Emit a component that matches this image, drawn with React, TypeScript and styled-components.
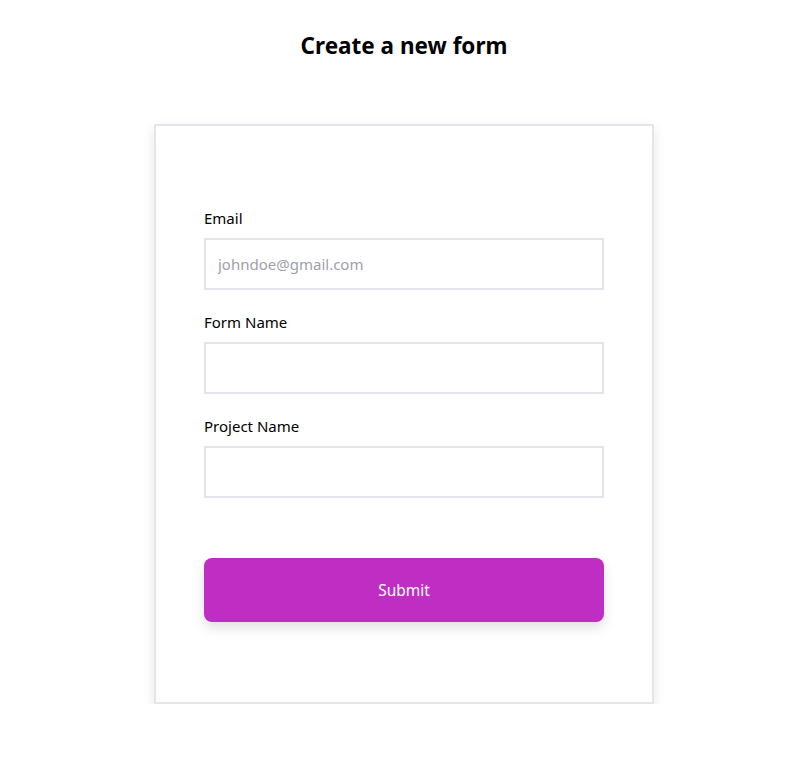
import React from "react";
import styled, { createGlobalStyle } from "styled-components";

const Global = createGlobalStyle`
  html, body { margin: 0; padding: 0; background: #ffffff; }
  body { font-family: "Noto Sans", "Open Sans", "Liberation Sans", sans-serif; color: #000; }
  * { box-sizing: border-box; }
`;

const Page = styled.div`
  display: flex;
  flex-direction: column;
  align-items: center;
  padding: 30px 0 0 2px;
`;

const Title = styled.h1`
  margin: 0;
  font-size: 22.5px;
  line-height: 32px;
  font-weight: 700;
`;

const Card = styled.form`
  margin-top: 62px;
  width: 500px;
  height: 580px;
  border: 2px solid #e5e4ea;
  box-shadow: 0 5px 12px rgba(0, 0, 0, 0.1);
  padding: 82px 48px 0;
  display: flex;
  flex-direction: column;
`;

const Field = styled.div`
  display: flex;
  flex-direction: column;
  margin-bottom: 22px;
`;

const Label = styled.label`
  font-size: 15px;
  line-height: 20px;
  margin-bottom: 10px;
`;

const Input = styled.input`
  height: 52px;
  border: 2px solid #e5e4ea;
  outline: none;
  padding: 0 12px;
  font-family: inherit;
  font-size: 15px;
  color: #333;
  &::placeholder { color: #a0a0aa; }
`;

const Button = styled.button`
  margin-top: 38px;
  height: 64px;
  border: none;
  border-radius: 8px;
  background: #c02dc2;
  color: #ffffff;
  font-family: inherit;
  font-size: 15.5px;
  box-shadow: 0 6px 12px rgba(0, 0, 0, 0.12);
  cursor: pointer;
`;

export default function App() {
  return (
    <>
      <Global />
      <Page>
        <Title>Create a new form</Title>
        <Card onSubmit={(e) => e.preventDefault()}>
          <Field>
            <Label>Email</Label>
            <Input placeholder="johndoe@gmail.com" />
          </Field>
          <Field>
            <Label>Form Name</Label>
            <Input />
          </Field>
          <Field>
            <Label>Project Name</Label>
            <Input />
          </Field>
          <Button type="submit">Submit</Button>
        </Card>
      </Page>
    </>
  );
}
